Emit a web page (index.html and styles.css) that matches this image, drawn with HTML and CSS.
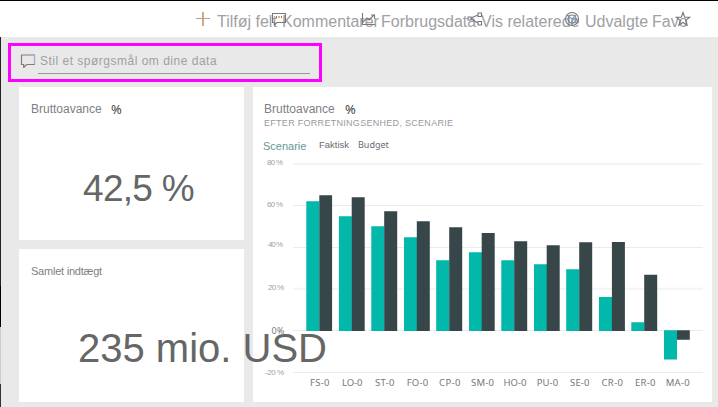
FILE: index.html
```
<!DOCTYPE html>
<html lang="da">
<head>
<meta charset="utf-8">
<title>Dashboard</title>
<link rel="stylesheet" href="styles.css">
</head>
<body>
<div class="app">
<header class="toolbar">
  <div class="action"><svg class="icon add" viewBox="0 0 16 16"><path d="M1 8.500h14" stroke="#aaa"/><path d="M8 2v14" stroke="#c99262" stroke-width="1.600"/></svg><span>Tilføj felt</span></div>
  <div class="action"><svg class="icon comment" viewBox="0 0 16 16"><path d="M1.500 2.500h13v9H6l-2.500 2.500v-2.500h-2z"/><path d="M5.500 5v2M8 5v2M10.500 5v2" stroke="#a87845"/></svg><span>Kommentarer</span></div>
  <div class="action"><svg class="icon usage" viewBox="0 0 16 16"><path d="M1.500 2v11.500H14M2 11l4-4 2 2 5-5M10 4h3.500v3.500"/></svg><span>Forbrugsdata</span></div>
  <div class="action"><svg class="icon related" viewBox="0 0 16 16"><path d="M4 7l7-3M4 8l7 4"/><path d="M1 6h3v3H1zM11 2h3.500v3.500H11zM11 10.500h3.500V14H11z" fill="#fff"/></svg><span>Vis relaterede</span></div>
  <div class="action"><svg class="icon featured" viewBox="0 0 16 16"><circle cx="8" cy="8" r="6.500"/><circle cx="8" cy="8" r="4"/><path d="M3 4l5 4 4-4M8 8v6M8 8l5 2" stroke="#7799b8"/></svg><span>Udvalgte</span></div>
  <div class="action"><svg class="icon star" viewBox="0 0 16 16"><path d="M8 1.500l1.700 4.700 5 .1-4 3.100 1.500 4.900L8 11.500l-4.200 2.800 1.500-4.900-4-3.100 5-.1z"/></svg><span>Favo</span></div>
</header>
<div class="question">
  <svg class="bubble" viewBox="0 0 16 14"><path d="M1.500 1v9.500h2.200v3l3-3h7.800V1z" fill="none" stroke="#8b7975" stroke-width="1.200"/><path d="M14.500 1v9.500" stroke="#8fb5d8"/></svg>
  <div class="field"><span>Stil et spørgsmål om dine data</span></div>
</div>
<main class="board">
  <div class="column">
    <section class="tile">
      <h2 class="heading"><span class="name">Bruttoavance</span><span class="pct">%</span></h2>
      <div class="value margin-value">42,5 %</div>
    </section>
    <section class="tile">
      <h2 class="small-heading">Samlet indtægt</h2>
      <div class="value income-value">235 mio. USD</div>
    </section>
  </div>
  <section class="tile chart-tile">
    <h2 class="heading"><span class="name">Bruttoavance</span><span class="pct">%</span></h2>
    <div class="subtitle">EFTER FORRETNINGSENHED, SCENARIE</div>
    <div class="legend"><span class="legend-title">Scenarie</span><span class="actual">Faktisk</span><span class="budget">Budget</span></div>
    <svg class="chart" viewBox="253 153 459 249">
      <g class="grid"><path d="M293 164h410" stroke-width="2" stroke="#f4f4f4"/><path d="M293 205.500h410M293 247.500h410"/><path d="M293 288.800h410" stroke-width="2" stroke="#f4f4f4"/><path d="M293 330.500h410M293 372.500h410"/></g>
      <g class="teal">
        <path d="M306.300 201.300h13V331h-13zM338.900 216.200h13V331h-13zM371.300 226.300h13V331h-13zM404 237.300h13V331h-13zM436.200 260.200h13V331h-13zM469 252.200h13V331h-13zM501.300 260.200h13V331h-13zM534 264.200h13V331h-13zM566.200 269.200h13V331h-13zM599 297h13v34h-13zM631.300 322.300h13v8.700h-13zM664 330.300h13v29.300h-13z"/>
      </g>
      <g class="dark">
        <path d="M319.300 195.200h12.800V331h-12.800zM351.700 197.200h13V331h-13zM384.200 211.200h13V331h-13zM416.800 221.200h13V331h-13zM449.200 227.300h13V331h-13zM481.700 233h13V331h-13zM514.200 241.300h13V331h-13zM546.700 245.300h13V331h-13zM579.200 242.300h13V331h-13zM611.900 242h13V331h-13zM644.200 274.700h13V331h-13zM677 330.300h12.800v9.400H677z"/>
      </g>
      <g class="ticks">
        <text x="267" y="164.500" textLength="16">80 %</text><text x="267" y="207" textLength="16">60 %</text><text x="268" y="247" textLength="15">40 %</text><text x="268" y="290" textLength="16">20 %</text><text class="zero" x="271.500" y="334" textLength="13">0%</text><text x="265" y="374.500" textLength="19">-20 %</text>
      </g>
      <g class="labels">
        <text x="310" y="386" textLength="19.500">FS-0</text><text x="342" y="386" textLength="20.500">LO-0</text><text x="375" y="386" textLength="19.500">ST-0</text><text x="406.700" y="386" textLength="21.500">FO-0</text><text x="439" y="386" textLength="21.500">CP-0</text><text x="471" y="386" textLength="23">SM-0</text><text x="503.500" y="386" textLength="23">HO-0</text><text x="536.700" y="386" textLength="21.500">PU-0</text><text x="570" y="386" textLength="19.500">SE-0</text><text x="601.500" y="386" textLength="21.500">CR-0</text><text x="635" y="386" textLength="20.500">ER-0</text><text x="665.700" y="386" textLength="24">MA-0</text>
      </g>
    </svg>
  </section>
</main>
</div>
</body>
</html>
```
FILE: styles.css
```
* { box-sizing: border-box; }
body { margin: 0; font-family: "Liberation Sans", Arial, sans-serif; }
.app {
  width: 718px; height: 407px; overflow: hidden; background: #e9e9e9;
  border-top: 1px solid #000; display: flex; flex-direction: column; position: relative;
}
.app::before {
  content: ""; position: absolute; left: 0; top: 36px; bottom: 0; width: 1px;
  background: linear-gradient(#222 0 249px, #000 249px 290px, #ccc 290px 347px, #333 347px);
}
.toolbar {
  height: 36px; flex: none; background: #fff; padding-left: 217px;
  display: grid; grid-template-columns: 65px 99px 100px 104px 67px 66px;
  font-size: 16px; line-height: 41px; color: #a0a0a4; white-space: nowrap;
}
.action { position: relative; }
.icon { position: absolute; top: 10px; width: 16px; height: 16px; fill: none; stroke: #77777c; stroke-width: 1.1; }
.add { left: -22px; top: 9px; }
.comment { left: -11px; }
.usage { left: -20px; }
.related { left: -14px; }
.featured { left: -21px; }
.star { left: 23px; }
.question {
  width: 314px; height: 39px; margin: 6px 0 0 8px; border: 3px solid #f0f;
  display: flex; padding: 5px 9px 0; flex: none;
}
.bubble { width: 16px; height: 14px; margin-top: 3px; }
.field {
  width: 272px; height: 23px; margin-left: 2px; padding-left: 2px; border-bottom: 1px solid #999;
  font-size: 12px; line-height: 21px; color: #a0a0a0; letter-spacing: .5px; white-space: nowrap;
}
.board { display: flex; gap: 9px; padding: 5px 6px 0 19px; }
.column { width: 225px; flex: none; display: grid; grid-template-columns: minmax(0, 1fr); grid-template-rows: 153px 153px; gap: 9px; position: relative; z-index: 1; }
.tile { background: #fff; }
h2 { margin: 0; font-weight: 400; white-space: nowrap; }
.heading { padding: 14px 0 0 12px; height: 30px; font-size: 12px; line-height: 17px; color: #808084; display: flex; }
.name { width: 80px; }
.pct { font-family: "Noto Sans", sans-serif; font-size: 13px; color: #444; }
.small-heading { padding: 12px 0 0 12px; font-size: 11px; line-height: 20px; color: #808084; letter-spacing: -.22px; }
.value { color: #666; white-space: nowrap; }
.margin-value { padding: 51px 0 0 64px; font-size: 37px; line-height: 42px; letter-spacing: -.7px; }
.income-value { padding: 45px 0 0 59px; font-size: 40px; line-height: 45px; }
.chart-tile { width: 459px; height: 315px; flex: none; }
.chart-tile .heading { padding-left: 11px; }
.chart-tile .name { width: 81px; }
.subtitle { height: 12px; padding-left: 11px; font-size: 9px; line-height: 12px; color: #99999f; letter-spacing: .29px; white-space: nowrap; }
.legend { height: 24px; padding: 7px 0 0 10px; display: flex; font-size: 11px; line-height: 20px; color: #6a6a70; }
.legend-title { width: 56px; color: #5f9994; }
.actual { width: 39px; font-size: 9.5px; line-height: 18px; }
.budget { font-family: "Noto Sans", sans-serif; font-size: 9px; line-height: 18px; }
.chart { display: block; width: 459px; height: 249px; }
.grid { stroke: #ebebeb; stroke-width: 1; }
.teal { fill: #01b8aa; }
.dark { fill: #374649; }
.ticks { font-size: 8px; fill: #a0a0a6; }
.ticks .zero { font-family: "Noto Sans", sans-serif; font-size: 9px; fill: #777; }
.labels { font-family: "Noto Sans", sans-serif; font-size: 9.5px; fill: #777; }
```
